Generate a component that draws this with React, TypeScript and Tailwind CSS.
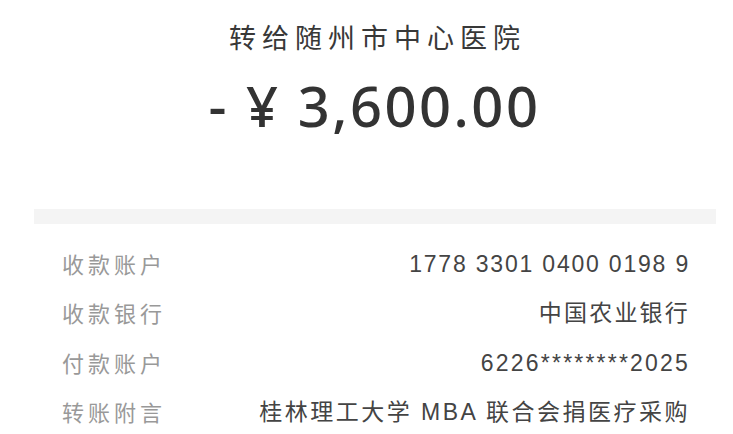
const rows = [
  { label: '收款账户', value: '1778 3301 0400 0198 9', track: 'tracking-[1.8px]' },
  { label: '收款银行', value: '中国农业银行', track: 'tracking-[2.2px]' },
  { label: '付款账户', value: '6226********2025', track: 'tracking-[2.2px]' },
  { label: '转账附言', value: '桂林理工大学 MBA 联合会捐医疗采购', track: 'tracking-[2.5px]' },
]

export default function App() {
  return (
    <div
      className="w-[733px] h-[434px] bg-white overflow-hidden"
      style={{ fontFamily: '"Noto Sans", "Noto Sans CJK SC", sans-serif' }}
    >
      <div className="pt-[22px] pl-[16px] flex flex-col items-center">
        <div className="text-[27px] leading-[32px] tracking-[6px] pl-[6px] text-[#383838]">转给随州市中心医院</div>
        <div className="mt-[20px] text-[56px] leading-[62px] font-medium tracking-[2.5px] text-[#333]">
          - ¥ 3,600.00
        </div>
      </div>
      <div className="mt-[73px] ml-[34px] mr-[17px] h-[15px] bg-[#f4f4f4]" />
      <div className="mt-[24px] pl-[62px] pr-[45px] flex flex-col gap-[17.5px]">
        {rows.map((r) => (
          <div key={r.label} className="flex justify-between items-center h-[32px]">
            <span className="text-[22px] tracking-[4px] text-[#999]">{r.label}</span>
            <span
              className={`text-[23px] ${r.track} -mr-[2px] text-[#444]`}
              style={{ fontFamily: '"Liberation Sans", "Noto Sans CJK SC", sans-serif' }}
            >
              {r.value}
            </span>
          </div>
        ))}
      </div>
    </div>
  )
}
